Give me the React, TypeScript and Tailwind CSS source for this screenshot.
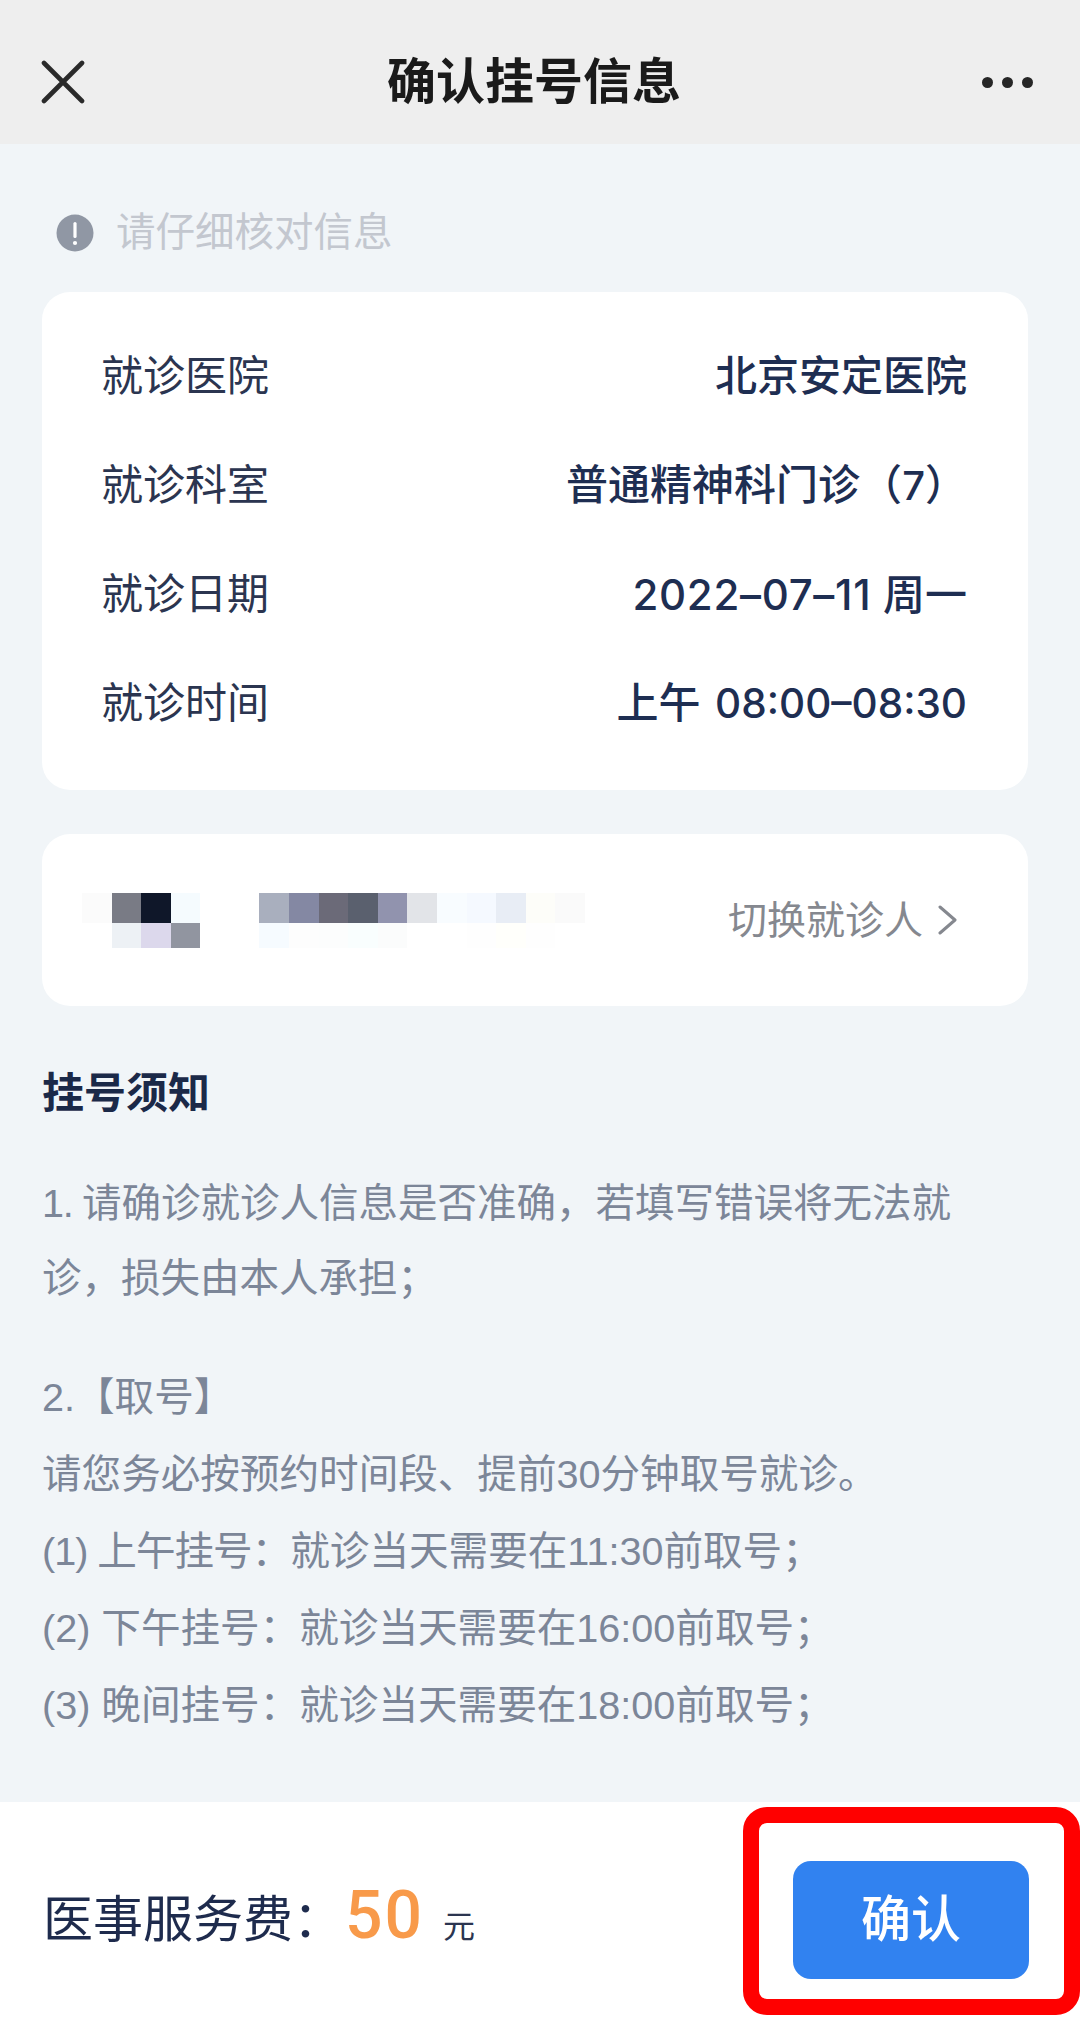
const FONT = "font-['Liberation_Sans','Noto_Sans_CJK_SC',sans-serif]";

const nameTop = ['bg-[#fbfbfb]', 'bg-[#797b85]', 'bg-[#0f1729]', 'bg-[#f5fbfe]'];
const nameBottom = ['bg-white', 'bg-[#edf1f5]', 'bg-[#dcd8ec]', 'bg-[#9195a0]'];
const idTop = ['bg-[#a9afbe]', 'bg-[#8488a3]', 'bg-[#6b6a78]', 'bg-[#5a606e]', 'bg-[#9193ae]', 'bg-[#e2e4e8]', 'bg-[#f8fcff]', 'bg-[#f5f9ff]', 'bg-[#e8edf5]', 'bg-[#fdfdf9]', 'bg-[#fafafa]'];
const idBottom = ['bg-[#f6fbff]', 'bg-[#fdfdfd]', 'bg-[#fcfdfd]', 'bg-[#f9fefe]', 'bg-[#fbfcfc]', 'bg-white', 'bg-white', 'bg-[#fefefe]', 'bg-[#fffffb]', 'bg-[#fefefe]', 'bg-white'];

function Mosaic({ top, bottom }: { top: string[]; bottom: string[] }) {
  return (
    <div>
      <div className="flex h-[30px]">
        {top.map((c, i) => <div key={i} className={`w-[29.6px] ${c}`} />)}
      </div>
      <div className="flex h-[25px]">
        {bottom.map((c, i) => <div key={i} className={`w-[29.6px] ${c}`} />)}
      </div>
    </div>
  );
}

function Digits({ className, children }: { className: string; children: React.ReactNode }) {
  return <span className={`font-['Inter',sans-serif] ${className}`}>{children}</span>;
}

function Row({ label, children }: { label: string; children: React.ReactNode }) {
  return (
    <div className="flex h-[109px] items-center justify-between">
      <span className="text-[42px] text-[#2b3550]">{label}</span>
      <span className="text-[42px] font-medium text-[#1e2e52]">{children}</span>
    </div>
  );
}

export default function App() {
  return (
    <div className={`relative flex h-[2028px] w-[1080px] flex-col overflow-hidden bg-[#f1f5f8] ${FONT}`}>
      <header className="relative flex h-[144px] shrink-0 items-center justify-between bg-[#eeeeee] pl-[41px] pr-[47px] pt-[20px]">
        <svg width="44" height="44" viewBox="0 0 44 44" fill="none" stroke="#2a2a2a" strokeWidth="4.6" strokeLinecap="round">
          <path d="M3 3 L41 41 M41 3 L3 41" />
        </svg>
        <h1 className="absolute left-[386px] w-[296px] text-center text-[49px] font-bold leading-[56px] text-[#1a1a1a]">确认挂号信息</h1>
        <div className="flex items-center gap-[9px]">
          <span className="h-[11px] w-[11px] rounded-full bg-[#262626]" />
          <span className="h-[11px] w-[11px] rounded-full bg-[#262626]" />
          <span className="h-[11px] w-[11px] rounded-full bg-[#262626]" />
        </div>
      </header>

      <main className="flex-1 pl-[42px] pr-[52px]">
        <div className="mt-[70px] flex h-[38px] items-center pl-[14px]">
          <svg width="38" height="38" viewBox="0 0 38 38">
            <circle cx="19" cy="19" r="18.5" fill="#9097a4" />
            <rect x="17.4" y="8" width="3.2" height="16" rx="1.6" fill="#fff" />
            <circle cx="19" cy="29" r="2.1" fill="#fff" />
          </svg>
          <span className="ml-[22px] text-[39.5px] leading-none text-[#c3c7cf]">请仔细核对信息</span>
        </div>

        <section className="mt-[40px] rounded-[28px] bg-white pb-[32px] pl-[59px] pr-[61px] pt-[30px]">
          <Row label="就诊医院">北京安定医院</Row>
          <Row label="就诊科室">普通精神科门诊（<Digits className="text-[40px]">7</Digits>）</Row>
          <Row label="就诊日期"><Digits className="text-[42px] tracking-[0.7px]">2022–07–11</Digits> 周一</Row>
          <Row label="就诊时间">上午 <Digits className="ml-[3px] text-[40.5px]">08:00–08:30</Digits></Row>
        </section>

        <section className="mt-[44px] flex h-[172px] items-center rounded-[28px] bg-white pl-[40px] pr-[71px]">
          <Mosaic top={nameTop} bottom={nameBottom} />
          <div className="ml-[59px]">
            <Mosaic top={idTop} bottom={idBottom} />
          </div>
          <span className="ml-auto text-[39px] leading-none text-[#85888f]">切换就诊人</span>
          <svg className="ml-[15px]" width="19" height="30" viewBox="0 0 19 30" fill="none" stroke="#85888f" strokeWidth="3" strokeLinecap="round" strokeLinejoin="round">
            <path d="M2 2 L17 15 L2 28" />
          </svg>
        </section>

        <h2 className="mt-[60px] text-[42px] font-bold leading-[56px] text-[#1b2948]">挂号须知</h2>

        <p className="mt-[44px] text-[39.5px] leading-[75px] text-[#7c8698]"><span className="tracking-[-1.3px]">1. </span>请确诊就诊人信息是否准确，若填写错误将无法就<br />诊，损失由本人承担；</p>

        <div className="mt-[43px] text-[39.6px] leading-[77px] text-[#7c8698]">
          <p>2.【取号】</p>
          <p>请您务必按预约时间段、提前30分钟取号就诊。</p>
          <p><span className="tracking-[-1px]">(1) 上午挂号：</span>就诊当天需要在11:30前取号；</p>
          <p>(2) 下午挂号：就诊当天需要在16:00前取号；</p>
          <p>(3) 晚间挂号：就诊当天需要在18:00前取号；</p>
        </div>
      </main>

      <footer className="flex h-[226px] shrink-0 items-center bg-white pl-[43px] pr-[51px] pt-[10px]">
        <span className="text-[50px] leading-none text-[#1e2b4d]">医事服务费：</span>
        <span className="mb-[8px] ml-[2px] font-['Roboto',sans-serif] text-[66px] font-medium leading-none tracking-[2px] text-[#f89a4a]">50</span>
        <span className="ml-[19px] mt-[13px] text-[32px] leading-none text-[#2b3550]">元</span>
        <button type="button" className="ml-auto h-[118px] w-[236px] rounded-[18px] bg-[#3182f0] text-[50px] font-medium text-white">确认</button>
      </footer>

      {/* red annotation box over the confirm button */}
      <div className="absolute left-[743px] top-[1807px] h-[208px] w-[337px] rounded-[24px] border-[16px] border-[#ff0000]" />
    </div>
  );
}
